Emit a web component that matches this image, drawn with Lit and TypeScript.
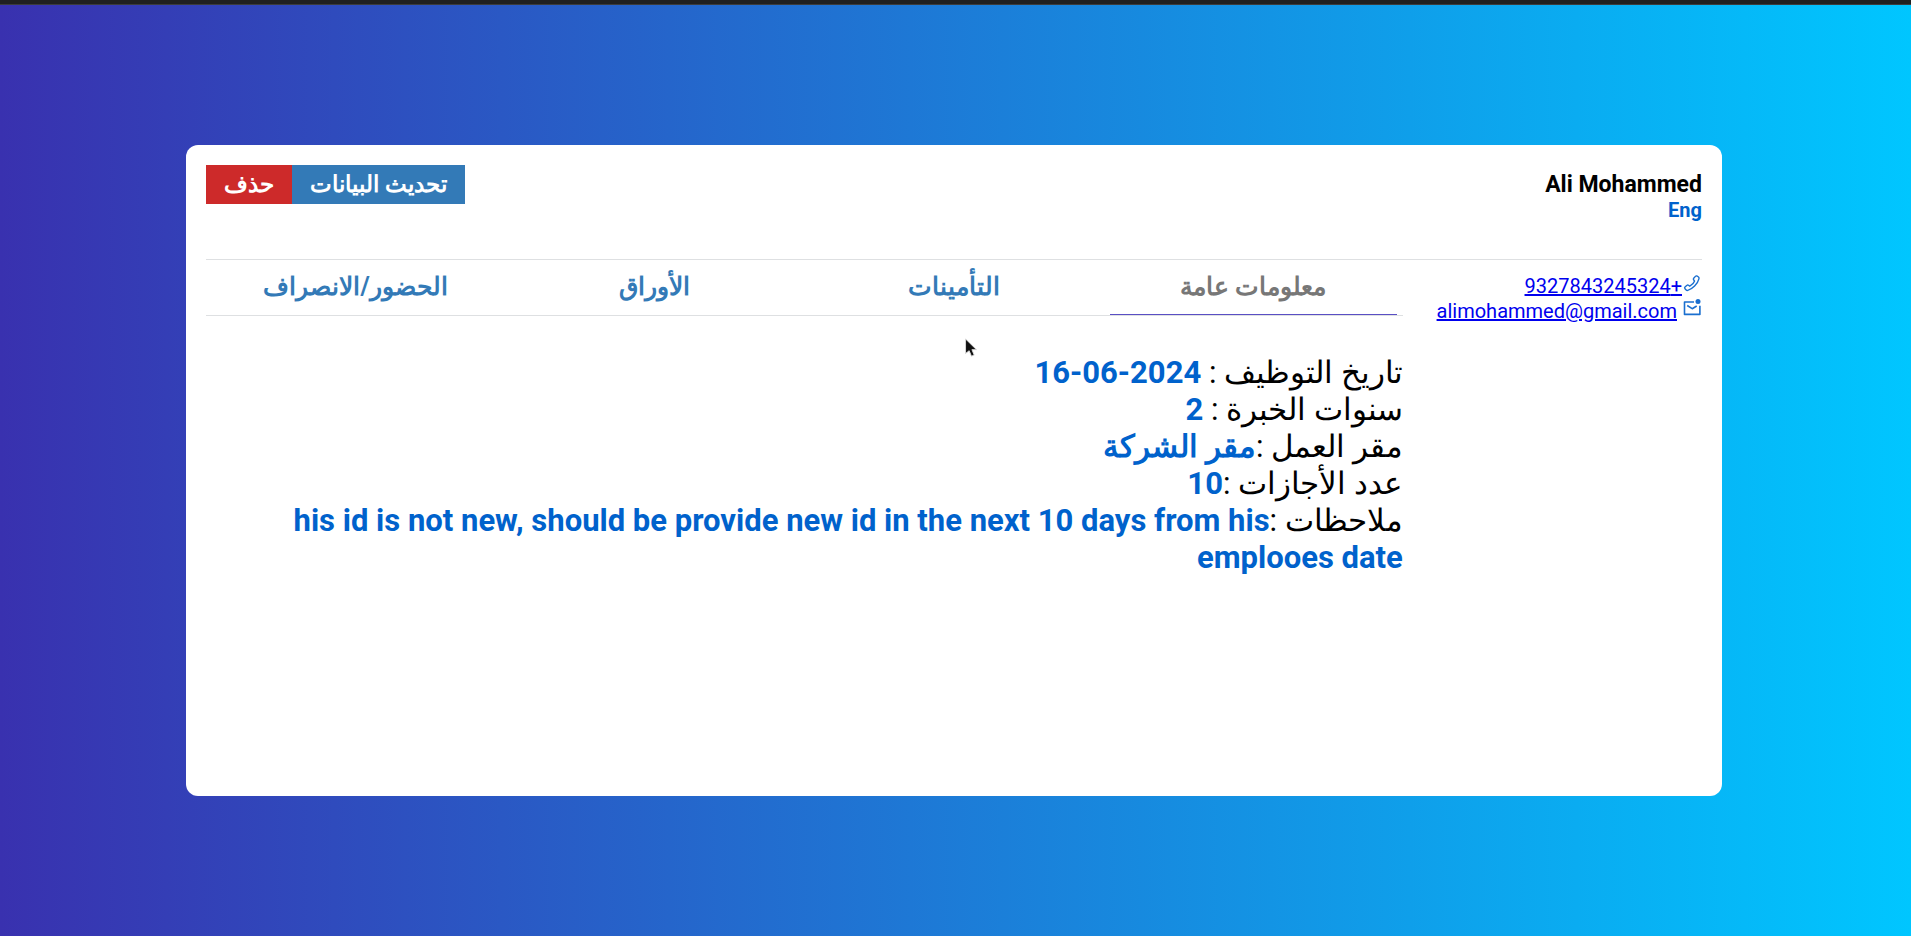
import { LitElement, html, css } from "lit";
import { customElement, state } from "lit/decorators.js";

const TABS = ["معلومات عامة", "التأمينات", "الأوراق", "الحضور/الانصراف"];

@customElement("app-root")
export class AppRoot extends LitElement {
  static styles = css`
    * {
      box-sizing: border-box;
    }
    :host {
      display: flex;
      flex-direction: column;
      min-height: 100vh;
      background: linear-gradient(to right, #3931af, #00c6ff);
      font-family: Roboto, sans-serif;
      color: #000;
    }
    .strip {
      height: 5px;
      background: #202020;
      border-bottom: 1px solid #3c3c3c;
    }
    .page {
      padding: 140px 189px 140px 186px;
      flex: 1;
      display: flex;
    }
    .card {
      flex: 1;
      min-width: 0;
      background: #fff;
      border-radius: 12px;
      padding: 20px;
    }
    header {
      display: flex;
      justify-content: space-between;
      align-items: flex-start;
      padding-bottom: 38px;
      border-bottom: 1px solid #dee0e2;
    }
    h1,
    .role,
    .info,
    .contact {
      margin: 0;
    }
    h1 {
      font-size: 23px;
      line-height: 28px;
      font-weight: 700;
      padding-top: 6px;
    }
    .role {
      font-size: 20px;
      line-height: 22px;
      font-weight: 700;
      color: #0062cc;
    }
    .actions {
      display: flex;
    }
    .action {
      border: 0;
      margin: 0;
      height: 39px;
      padding: 0 18px;
      font: 700 23px/38px Roboto, sans-serif;
      color: #fff;
      background: #337ab7;
    }
    .action.remove {
      background: #cd2a2a;
    }
    .body {
      display: grid;
      grid-template-columns: 1fr 4fr;
    }
    .contact {
      padding: 14px 0 0;
      list-style: none;
      font-size: 20px;
      line-height: 25px;
    }
    .contact li {
      display: flex;
    }
    .contact a {
      color: #0000ee;
    }
    .contact svg {
      width: 20px;
      height: 20px;
      flex: none;
    }
    .contact .mail {
      gap: 5px;
    }
    .tabs {
      display: grid;
      grid-template-columns: repeat(4, 1fr);
      border-bottom: 1px solid #dee0e2;
    }
    .tab {
      margin: 0 6px;
      padding: 0;
      border: 0;
      border-bottom: 1px solid transparent;
      background: none;
      height: 55px;
      font: 700 25px/30px Roboto, sans-serif;
      color: #337ab7;
    }
    .tab.active {
      color: #777;
      border-bottom-color: #5a4fc4;
    }
    .info {
      padding-top: 38px;
      font-size: 31px;
      line-height: 37px;
    }
    .info dt,
    .info dd {
      display: inline;
      margin: 0;
    }
    .info dd {
      font-weight: 700;
      color: #0062cc;
    }
    .pointer {
      position: absolute;
      left: 964px;
      top: 338px;
      width: 14px;
      height: 20px;
      pointer-events: none;
    }
  `;

  @state() private active = 0;

  private row(label: string, value: string) {
    return html`<div><dt>${label}</dt><dd>${value}</dd></div>`;
  }

  render() {
    return html`
      <div class="strip"></div>
      <main class="page" dir="rtl" lang="ar">
        <section class="card">
          <header>
            <div>
              <h1>Ali Mohammed</h1>
              <p class="role">Eng</p>
            </div>
            <div class="actions">
              <button class="action">تحديث البيانات</button>
              <button class="action remove">حذف</button>
            </div>
          </header>
          <div class="body">
            <ul class="contact">
              <li>
                <svg viewBox="0 0 20 20" fill="none" stroke="#1a6fcf" stroke-width="1.4" stroke-linejoin="round" aria-hidden="true">
                  <path d="M13.400 2.400l-1.700 1.900q-.7.8-.1 1.500l1 1.300q-1.200 3.300-4.800 5.100l-1.300-1q-.8-.6-1.500.1l-2 1.800q-.8.8 0 1.600l1.200 1.300q.6.7 1.600.4 3.400-.9 6.800-4.300t4.400-7.500q.2-1-.5-1.600l-1.500-1q-.9-.4-1.600.4z" />
                </svg>
                <a href="tel:+9327843245324">+9327843245324</a>
              </li>
              <li class="mail">
                <svg viewBox="0 0 20 20" fill="none" stroke="#1a6fcf" stroke-width="1.6" stroke-linejoin="round" aria-hidden="true">
                  <path d="M12 3H2.500v12.400h15.400V6.700" />
                  <path d="M5.200 6.500l5 3.200 4.500-2.700" />
                  <circle cx="16" cy="2.600" r="2.500" fill="#1a6fcf" stroke="none" />
                </svg>
                <a href="mailto:alimohammed@gmail.com">alimohammed@gmail.com</a>
              </li>
            </ul>
            <div>
              <div class="tabs" role="tablist">
                ${TABS.map(
                  (t, i) => html`<button
                    role="tab"
                    aria-selected=${i === this.active}
                    class="tab ${i === this.active ? "active" : ""}"
                    @click=${() => (this.active = i)}
                  >${t}</button>`
                )}
              </div>
              <dl class="info">
                ${this.row("تاريخ التوظيف : ", "16-06-2024")}
                ${this.row("سنوات الخبرة : ", "2")}
                ${this.row("مقر العمل :", "مقر الشركة")}
                ${this.row("عدد الأجازات :", "10")}
                ${this.row("ملاحظات :", "his id is not new, should be provide new id in the next 10 days from his emplooes date")}
              </dl>
            </div>
          </div>
        </section>
      </main>
      <svg class="pointer" viewBox="0 0 14 22" aria-hidden="true">
        <path d="M1 1v16l4-3 2.500 6 3-1.200-2.500-6h5z" fill="#111" stroke="#ddd" stroke-width="1" />
      </svg>
    `;
  }
}
